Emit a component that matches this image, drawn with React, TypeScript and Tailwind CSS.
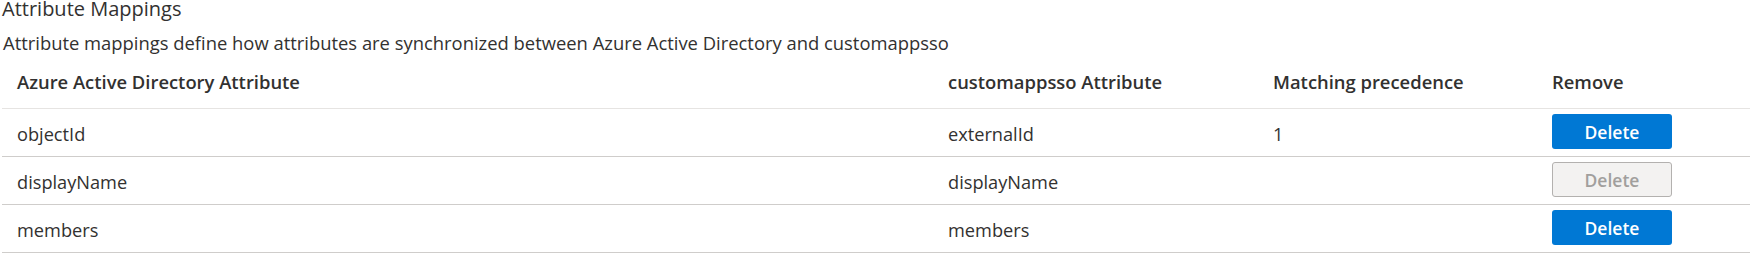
const rows = [
  { source: "objectId", target: "externalId", precedence: "1", canDelete: true },
  { source: "displayName", target: "displayName", precedence: "", canDelete: false },
  { source: "members", target: "members", precedence: "", canDelete: true },
];

const cols = "grid grid-cols-[931px_325px_279px_1fr]";

export default function App() {
  return (
    <main className="w-[1750px] h-[258px] overflow-hidden bg-white text-[#323130] font-['Open_Sans',sans-serif]">
      <h2 className="pl-[2px] pt-[1px] text-[20px] leading-[16px]">Attribute Mappings</h2>
      <p className="pl-[3px] mt-[14px] text-[18.4px] leading-[24px]">
        Attribute mappings define how attributes are synchronized between Azure Active Directory and customappsso
      </p>

      <div className="ml-[2px]">
        <div className={`${cols} h-[54px] items-center border-b border-[#e6e4e2] text-[18.4px] leading-[24px] font-semibold`}>
          <div className="pl-[15px]">Azure Active Directory Attribute</div>
          <div className="pl-[15px]">customappsso Attribute</div>
          <div className="pl-[15px]">Matching precedence</div>
          <div className="pl-[15px]">Remove</div>
        </div>

        {rows.map((r) => (
          <div
            key={r.source}
            className={`${cols} h-[48px] items-center border-b border-[#cfcdcb] text-[18.2px] leading-[24px]`}
          >
            <div className="pl-[15px] pt-[2px]">{r.source}</div>
            <div className="pl-[15px] pt-[2px]">{r.target}</div>
            <div className="pl-[15px] pt-[2px]">{r.precedence}</div>
            <div className="pl-[15px] -mt-[2px]">
              {r.canDelete ? (
                <button className="w-[120px] h-[35px] rounded-[3px] bg-[#0078d4] text-white font-semibold text-[17.5px] leading-[24px]">
                  Delete
                </button>
              ) : (
                <button
                  disabled
                  className="w-[120px] h-[35px] rounded-[3px] bg-[#f3f2f1] border border-[#b3b1af] text-[#a19f9d] font-semibold text-[17.5px] leading-[24px]"
                >
                  Delete
                </button>
              )}
            </div>
          </div>
        ))}
      </div>
    </main>
  );
}
